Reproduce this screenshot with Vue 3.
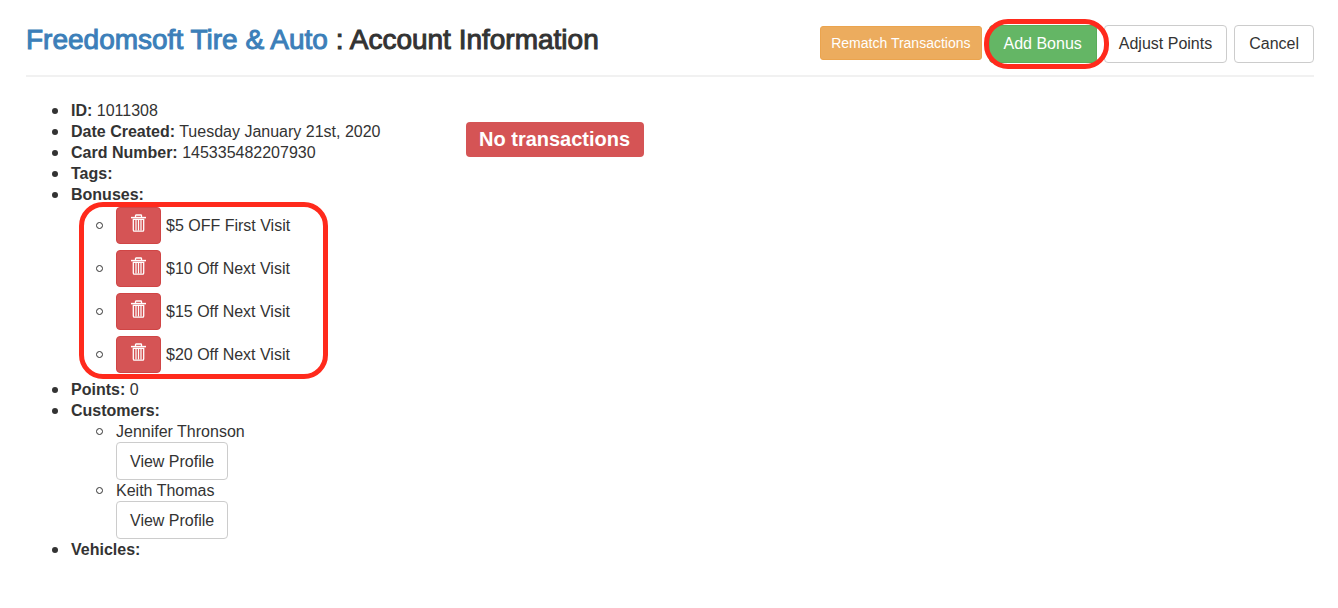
<script setup>
const bonuses = ['$5 OFF First Visit', '$10 Off Next Visit', '$15 Off Next Visit', '$20 Off Next Visit']
const customers = ['Jennifer Thronson', 'Keith Thomas']
</script>

<template>
  <main class="page">
    <header class="head">
      <h1><a href="#">Freedomsoft Tire &amp; Auto</a> : Account Information</h1>
      <div class="actions">
        <button type="button" class="btn small warning">Rematch Transactions</button>
        <span class="marked">
          <button type="button" class="btn success">Add Bonus</button>
        </span>
        <button type="button" class="btn">Adjust Points</button>
        <button type="button" class="btn">Cancel</button>
      </div>
    </header>

    <div class="columns">
      <ul class="facts">
        <li><strong>ID:</strong> 1011308</li>
        <li><strong>Date Created:</strong> Tuesday January 21st, 2020</li>
        <li><strong>Card Number:</strong> 145335482207930</li>
        <li><strong>Tags:</strong></li>
        <li>
          <strong>Bonuses:</strong>
          <ul class="bonuses">
            <li v-for="bonus in bonuses" :key="bonus">
              <button type="button" class="btn danger" :aria-label="'Delete ' + bonus">
                <svg viewBox="0 0 15 18" width="15" height="18" fill="none" stroke="#fff" aria-hidden="true">
                  <path d="M4.5 3V1.6Q4.5 1 5.1 1H9.9Q10.5 1 10.5 1.6V3" stroke-width="1.3" />
                  <path d="M0 3.6H15" stroke-width="1.5" />
                  <path d="M2.3 5.3V16Q2.3 17.2 3.4 17.2H11.6Q12.7 17.2 12.7 16V5.3Z" stroke-width="1.3" />
                  <path d="M5 6V16.5M7.5 6V16.5M10 6V16.5" stroke-width="1.2" />
                </svg>
              </button>
              <span>{{ bonus }}</span>
            </li>
          </ul>
        </li>
        <li><strong>Points:</strong> 0</li>
        <li>
          <strong>Customers:</strong>
          <ul>
            <li v-for="name in customers" :key="name">
              {{ name }}
              <button type="button" class="btn profile">View Profile</button>
            </li>
          </ul>
        </li>
        <li><strong>Vehicles:</strong></li>
      </ul>
      <section>
        <span class="label">No transactions</span>
      </section>
    </div>
  </main>
</template>

<style>
body {
  margin: 0;
  background: #fff;
}
</style>

<style scoped>
.page {
  padding: 25px 24px 24px 26px;
  color: #333;
  font: 16px/21px "Liberation Sans", Arial, sans-serif;
}
.head {
  display: flex;
  justify-content: space-between;
  align-items: flex-start;
  padding-bottom: 12px;
  border-bottom: 2px solid #f1f1f1;
}
h1 {
  margin: 0;
  font-size: 28px;
  line-height: 30px;
  font-weight: 400;
  -webkit-text-stroke: 1px currentColor;
}
a {
  color: #3c7fb9;
  text-decoration: none;
}
.actions {
  display: flex;
  align-items: flex-start;
  gap: 7px;
}
.btn {
  box-sizing: border-box;
  height: 38px;
  padding: 0 14px 2px;
  border: 1px solid #ccc;
  border-radius: 4px;
  background: #fff;
  color: #333;
  font: inherit;
  white-space: nowrap;
}
.small {
  height: 34px;
  margin-top: 1px;
  padding: 0 10px;
  font-size: 14px;
  border-radius: 3px;
}
.warning {
  border-color: #eba44e;
  background: #ecac5e;
  color: #fff;
}
.success {
  border-color: #5aad5a;
  background: #64b665;
  color: #fff;
}
.danger {
  border-color: #d04545;
  background: #d55455;
}
.marked {
  position: relative;
}
.marked::after,
.bonuses::after {
  content: "";
  position: absolute;
  box-sizing: border-box;
  border: 5px solid #ff2a1c;
  border-radius: 24px;
  pointer-events: none;
}
.marked::after {
  inset: -6px -12px -6px -5px;
}
.columns {
  display: grid;
  grid-template-columns: 1fr 2fr;
  gap: 16px;
  padding-top: 23px;
}
ul {
  margin: 0;
  padding-left: 45px;
  list-style: none;
}
li::before {
  content: "";
  display: inline-block;
  box-sizing: border-box;
  width: 6px;
  height: 6px;
  margin: 0 13px 0 -19px;
  border-radius: 50%;
  background: #333;
  vertical-align: 2px;
}
ul ul li::before {
  width: 7px;
  height: 7px;
  margin-left: -20px;
  border: 1px solid #333;
  background: none;
}
.bonuses {
  position: relative;
  padding: 2px 0 6px 45px;
}
.bonuses::after {
  inset: -3px auto 0 8px;
  width: 249px;
}
.bonuses li {
  display: flex;
  align-items: center;
}
.bonuses li + li {
  margin-top: 6px;
}
.bonuses .btn {
  width: 45px;
  height: 37px;
  margin-right: 5px;
  padding: 0 0 5px;
}
svg {
  display: block;
  margin: 0 auto;
}
.profile {
  display: block;
  padding: 0 13px;
}
.label {
  display: inline-block;
  margin-top: 22px;
  padding: 5px 14px 6px 13px;
  border-radius: 4px;
  background: #d55455;
  color: #fff;
  font-size: 20px;
  line-height: 24px;
  font-weight: 700;
}
</style>
